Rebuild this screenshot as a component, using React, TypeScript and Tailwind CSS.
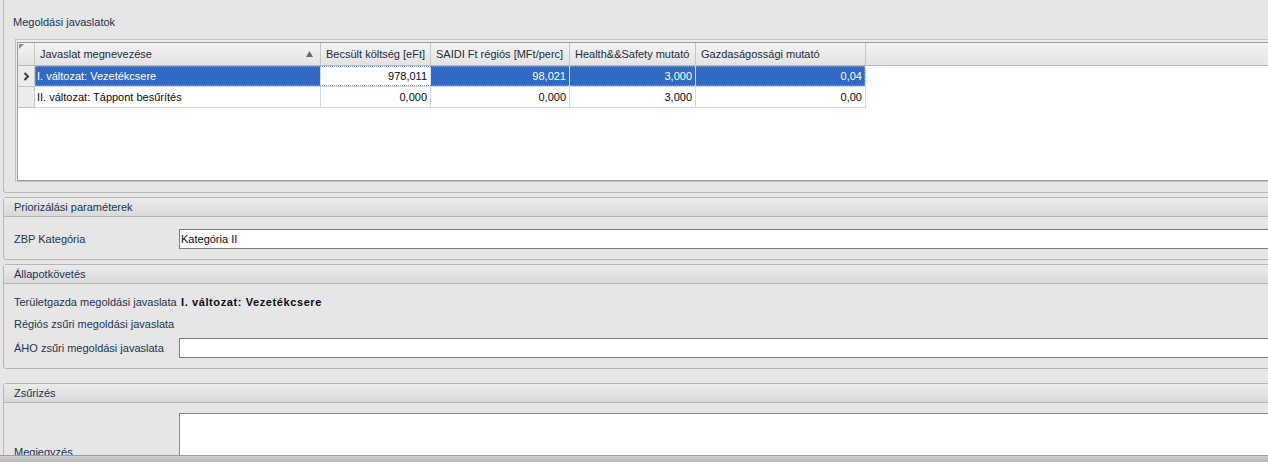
const font = { fontFamily: '"Liberation Sans", Arial, sans-serif' };

const cols = [
  { title: "Javaslat megnevezése", w: "w-[286px]", sort: true },
  { title: "Becsült költség [eFt]", w: "w-[110px]" },
  { title: "SAIDI Ft régiós [MFt/perc]", w: "w-[139px]" },
  { title: "Health&&Safety mutató", w: "w-[126px]" },
  { title: "Gazdaságossági mutató", w: "w-[170px]" },
];

const rows = [
  ["I. változat: Vezetékcsere", "978,011", "98,021", "3,000", "0,04"],
  ["II. változat: Táppont besűrítés", "0,000", "0,000", "3,000", "0,00"],
];

const Chevron = () => (
  <svg width="7" height="9" viewBox="0 0 7 9">
    <path d="M1.5 1 L5 4.5 L1.5 8" fill="none" stroke="#3c3c3c" strokeWidth="2" />
  </svg>
);

const SortUp = () => (
  <svg width="7" height="6" viewBox="0 0 7 6">
    <path d="M3.5 0 L7 6 L0 6 Z" fill="#6a6a6a" />
  </svg>
);

const Grid = () => (
  <div className="ml-[2px] mt-[10px] h-[143px] border border-[#c2c2c2] bg-[#ededed] pt-[2px] pl-[1px]">
    <div className="h-full border border-[#9c9c9c] bg-white overflow-hidden">
      <div className="flex h-[23px] border-b border-[#b9b9b9] bg-gradient-to-b from-[#f4f4f4] to-[#e3e3e3] text-[#1f2b3a]">
        <div className="relative w-[17px] shrink-0 border-r border-[#c6c6c6]">
          <svg className="absolute left-[1px] top-[1px]" width="5" height="5" viewBox="0 0 5 5">
            <path d="M0 0 L5 0 L0 5 Z" fill="#8a8a8a" />
          </svg>
        </div>
        {cols.map((c) => (
          <div
            key={c.title}
            className={`${c.w} shrink-0 border-r border-[#c6c6c6] pl-[5px] pr-[7px] flex items-center justify-between leading-[22px]`}
          >
            <span className="whitespace-nowrap">{c.title}</span>
            {c.sort && <SortUp />}
          </div>
        ))}
      </div>
      {rows.map((r, i) => {
        const sel = i === 0;
        return (
          <div key={i} className="flex h-[21px]">
            <div className="w-[17px] shrink-0 border-r border-b border-[#c6c6c6] bg-[#ececec] flex items-center justify-center">
              {sel && <Chevron />}
            </div>
            <div className="relative flex">
              {r.map((v, j) => {
                const blue = sel && j !== 1;
                return (
                  <div
                    key={j}
                    className={`${cols[j].w} shrink-0 border-r border-b border-[#d3d9e3] leading-[20px] whitespace-nowrap ${
                      j === 0 ? "pl-[2px] text-left" : "pr-[3px] text-right"
                    } ${blue ? "bg-[#316ac5] text-white" : "bg-white text-[#0a0a14]"}`}
                  >
                    {v}
                  </div>
                );
              })}
              {sel && (
                <div className="absolute left-0 right-[1px] top-0 bottom-[1px] border border-dotted border-[#7f9ed6] pointer-events-none" />
              )}
            </div>
          </div>
        );
      })}
    </div>
  </div>
);

const PanelHeader = ({ title }: { title: string }) => (
  <div className="h-[19px] border-b border-[#b4b4b4] bg-gradient-to-b from-[#ebebeb] to-[#d9d9d9] pl-[10px] leading-[19px] text-[#20344f]">
    {title}
  </div>
);

const Input = ({ value }: { value?: string }) => (
  <div className="flex-1 h-[20px] border border-[#7d7d7d] bg-white pl-[1px] leading-[18px] text-[#0a0a14]">
    {value}
  </div>
);

export default function App() {
  return (
    <div
      className="w-[1268px] h-[462px] overflow-hidden bg-[#e6e6e6] flex flex-col text-[11px] text-[#20344f]"
      style={font}
    >
      <div className="flex-1 min-h-0 overflow-hidden">
        <div className="ml-[3px] w-[1290px] h-[193px] border-l border-b border-[#bababa] rounded-bl-[3px] pl-[9px] pt-[16px]">
          <div className="leading-[13px]">Megoldási javaslatok</div>
          <Grid />
        </div>

        <div className="ml-[3px] mt-[4px] w-[1290px] border border-[#b6b6b6] rounded-[3px]">
          <PanelHeader title="Priorizálási paraméterek" />
          <div className="flex items-center pt-[12px] pb-[10px]">
            <div className="w-[175px] pl-[10px]">ZBP Kategória</div>
            <Input value="Kategória II" />
          </div>
        </div>

        <div className="ml-[3px] mt-[4px] w-[1290px] border border-[#b6b6b6] rounded-[3px]">
          <PanelHeader title="Állapotkövetés" />
          <div className="pt-[7px] pb-[10px]">
            <div className="flex items-center h-[22px]">
              <div className="w-[175px] pl-[10px]">Területgazda megoldási javaslata</div>
              <div className="pl-[2px] font-bold tracking-[0.6px] text-[#0a0a14]">I. változat: Vezetékcsere</div>
            </div>
            <div className="flex items-center h-[22px]">
              <div className="w-[175px] pl-[10px]">Régiós zsűri megoldási javaslata</div>
            </div>
            <div className="flex items-center mt-[3px]">
              <div className="w-[175px] pl-[10px]">ÁHO zsűri megoldási javaslata</div>
              <Input />
            </div>
          </div>
        </div>

        <div className="ml-[3px] mt-[14px] w-[1290px] border border-[#b6b6b6] rounded-[3px]">
          <PanelHeader title="Zsűrizés" />
          <div className="flex pt-[10px]">
            <div className="w-[175px] pl-[10px] pt-[33px] leading-[13px]">Megjegyzés</div>
            <div className="flex-1 h-[80px] border border-[#8a8a8a] bg-white" />
          </div>
        </div>
      </div>
      <div className="h-[7px] shrink-0 border-t border-[#9c9c9c] bg-gradient-to-b from-[#d0d0d0] to-[#b4b4b4]" />
    </div>
  );
}
